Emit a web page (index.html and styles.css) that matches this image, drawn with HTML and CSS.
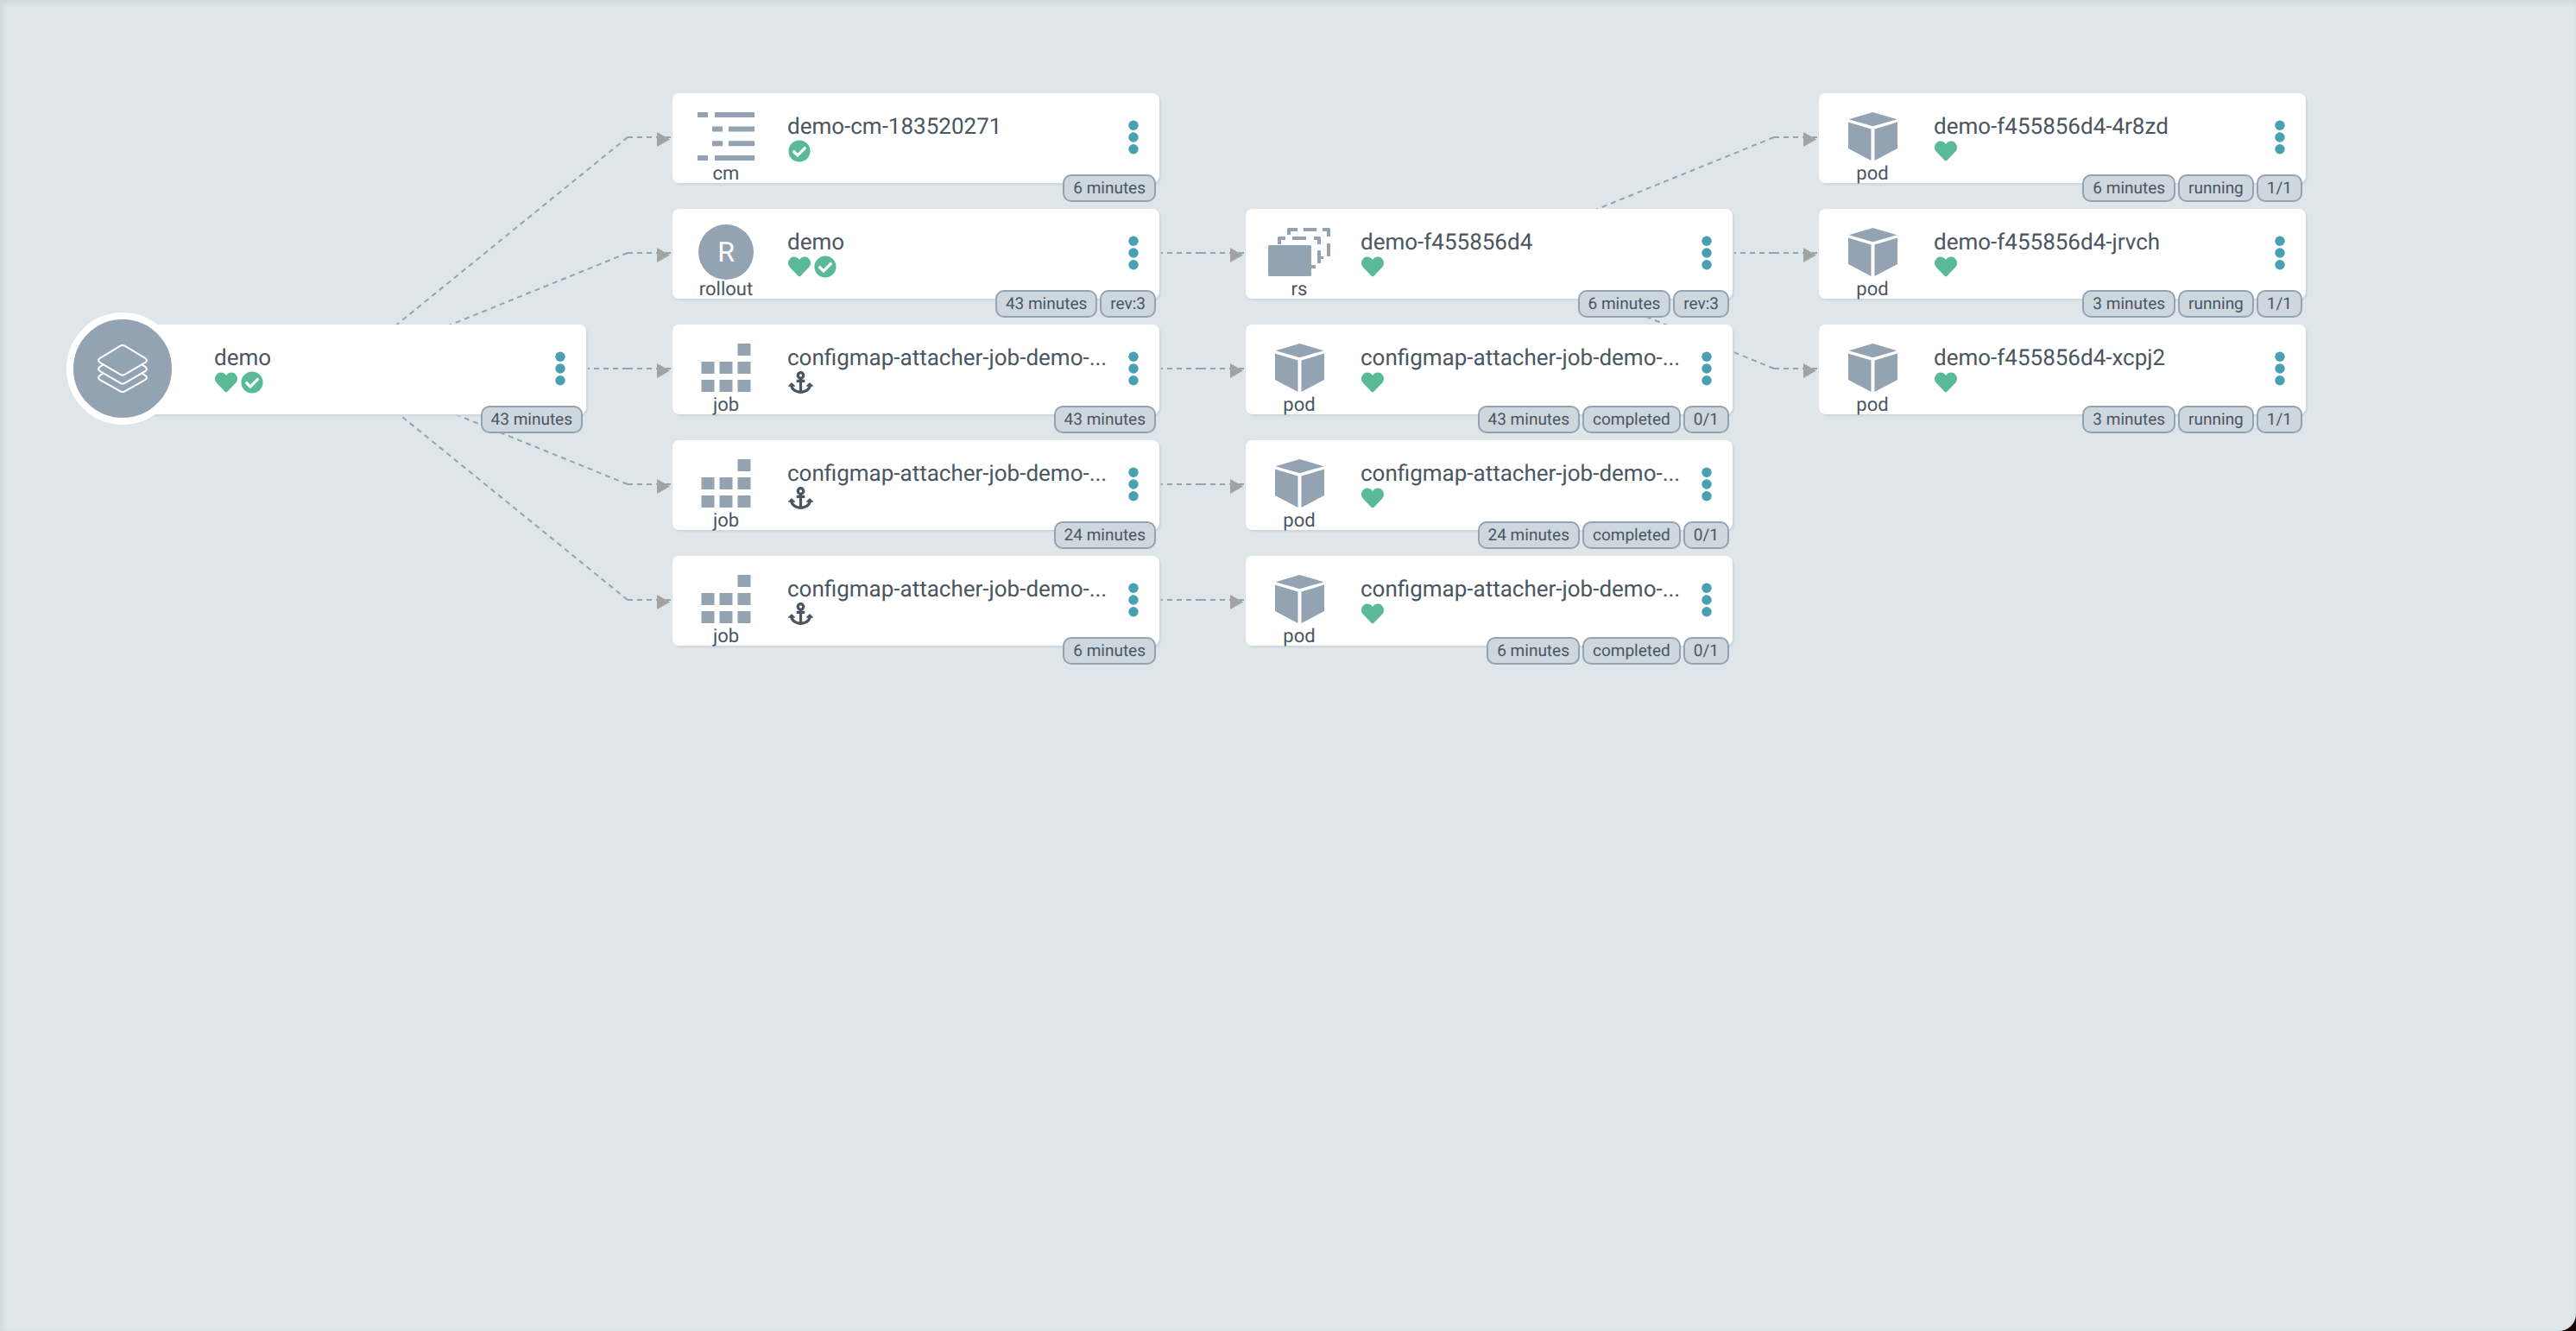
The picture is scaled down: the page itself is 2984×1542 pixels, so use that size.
FILE: index.html
```html
<!DOCTYPE html>
<html lang="en">
<head>
<meta charset="utf-8">
<title>demo - resource tree</title>
<link rel="stylesheet" href="styles.css">
</head>
<body>
<svg class="sprite" aria-hidden="true">
  <symbol id="layers" viewBox="0 0 58 56">
    <g fill="none" stroke="#fff" stroke-width="2" stroke-linejoin="round" stroke-linecap="round">
      <path d="M26.500 1.700Q29 .3 31.500 1.700L55.500 16.200Q58.500 18.500 55.500 20.800L31.500 34.800Q29 36.300 26.500 34.800L2.500 20.800Q-.5 18.500 2.500 16.200Z"/>
      <path d="M6.500 23.500L2.500 26.200Q-.5 28.500 2.500 30.800L26.500 44.800Q29 46.300 31.500 44.800L55.500 30.800Q58.500 28.500 55.500 26.200L51.500 23.500"/>
      <path d="M6.500 33.500L2.500 36.200Q-.5 38.500 2.500 40.800L26.500 54.300Q29 55.800 31.500 54.300L55.500 40.800Q58.500 38.500 55.500 36.200L51.500 33.500"/>
    </g>
  </symbol>
  <symbol id="cm" viewBox="0 0 66 56">
    <path d="M0 0h12v6H0zM20 0h46v6H20zM17 16.500h12v6H17zM36 16.500h30v6H36zM17 33.300h12v6H17zM36 33.300h30v6H36zM0 50h12v6H0zM20 50h46v6H20z"/>
  </symbol>
  <symbol id="job" viewBox="0 0 58 56">
    <path d="M42.500 0h15v14h-15zM.5 21h15v14H.5zM21.500 21h15v14h-15zM42.500 21h15v14h-15zM.5 42h15v14H.5zM21.500 42h15v14h-15zM42.500 42h15v14h-15z"/>
  </symbol>
  <symbol id="rs" viewBox="0 0 72 56">
    <rect y="20" width="50" height="36" rx="1.500"/>
    <path d="M12 10h8v4h-5v5h-4v-8zM28 10h16v4H28zM53 10h7l1 1v8h-4v-5h-4zM57 26h4v7h3v3h-3v5h-4zM50 43h5v4h-5zM23 0h11v4h-8v4h-4V1zM41 0h15v4H41zM63 0h8l1 1v9h-4V4h-5zM68 18h4v15h-4z"/>
  </symbol>
  <symbol id="pod" viewBox="0 0 57 56">
    <path d="M28.500 0L56.500 8.200 28.500 16.200.7 8.200zM0 11.500L26.500 19.500V56L0 42zM57 11.500L30.500 19.500V56L57 42z"/>
  </symbol>
  <symbol id="heart" viewBox="0 0 512 512">
    <path d="M462.300 62.600C407.500 15.900 326 24.300 275.700 76.200L256 96.500l-19.700-20.300C186.100 24.300 104.500 15.900 49.700 62.600c-62.800 53.600-66.100 149.800-9.900 207.900l193.500 199.800c12.500 12.900 32.800 12.900 45.300 0l193.500-199.800c56.300-58.100 53-154.300-9.800-207.900z"/>
  </symbol>
  <symbol id="check" viewBox="0 0 512 512">
    <path d="M504 256c0 136.967-111.033 248-248 248S8 392.967 8 256 119.033 8 256 8s248 111.033 248 248zM227.314 387.314l184-184c6.248-6.248 6.248-16.379 0-22.627l-22.627-22.627c-6.248-6.249-16.379-6.249-22.628 0L216 308.118l-70.059-70.059c-6.248-6.248-16.379-6.248-22.628 0l-22.627 22.627c-6.248 6.248-6.248 16.379 0 22.627l104 104c6.249 6.249 16.379 6.249 22.628.001z"/>
  </symbol>
  <symbol id="anchor" viewBox="0 0 576 512">
    <path d="M12.971 352h32.394C67.172 454.735 181.944 512 288 512c106.229 0 220.853-57.380 242.635-160h32.394c10.691 0 16.045-12.926 8.485-20.485l-67.029-67.029c-4.686-4.686-12.284-4.686-16.971 0l-67.029 67.029c-7.560 7.560-2.206 20.485 8.485 20.485h35.146c-20.290 54.317-84.963 86.588-144.117 94.015V256h52c6.627 0 12-5.373 12-12v-40c0-6.627-5.373-12-12-12h-52v-5.470c37.281-13.226 63.971-48.851 63.971-90.530C384 42.977 340.877-.061 287.847 0 234.806.061 192 43.098 192 96.139 192 137.751 218.718 173.316 256 186.529V192h-52c-6.627 0-12 5.373-12 12v40c0 6.627 5.373 12 12 12h52v190.015c-58.936-7.399-123.820-39.679-144.117-94.015h35.146c10.691 0 16.045-12.926 8.485-20.485l-67.029-67.029c-4.686-4.686-12.284-4.686-16.971 0L4.485 331.515C-3.074 339.074 2.280 352 12.971 352zM288 64c17.645 0 32 14.355 32 32s-14.355 32-32 32-32-14.355-32-32 14.355-32 32-32z"/>
  </symbol>
  <symbol id="dots" viewBox="0 0 12 40">
    <circle cx="6" cy="6.300" r="5.700"/><circle cx="6" cy="20" r="5.700"/><circle cx="6" cy="33.700" r="5.700"/>
  </symbol>
  <symbol id="arrow" viewBox="0 0 15 17"><path d="M0 0L15 8.500 0 17z"/></symbol>
</svg>

<main class="tree">
  <svg class="edges" aria-hidden="true">
    <g class="lines">
      <path d="M727 159L397 427M727 159H777"/>
      <path d="M727 293L397 427M727 293H777"/>
      <path d="M727 427H397M727 427H777"/>
      <path d="M727 561L397 427M727 561H777"/>
      <path d="M727 695L397 427M727 695H777"/>
      <path d="M1391 293H1061M1391 293H1441"/>
      <path d="M1391 427H1061M1391 427H1441"/>
      <path d="M1391 561H1061M1391 561H1441"/>
      <path d="M1391 695H1061M1391 695H1441"/>
      <path d="M2055 159L1725 293M2055 159H2105"/>
      <path d="M2055 293H1725M2055 293H2105"/>
      <path d="M2055 427L1725 293M2055 427H2105"/>
    </g>
    <g class="arrows">
      <use href="#arrow" x="761" y="153" width="15" height="17"/>
      <use href="#arrow" x="761" y="287" width="15" height="17"/>
      <use href="#arrow" x="761" y="421" width="15" height="17"/>
      <use href="#arrow" x="761" y="555" width="15" height="17"/>
      <use href="#arrow" x="761" y="689" width="15" height="17"/>
      <use href="#arrow" x="1425" y="287" width="15" height="17"/>
      <use href="#arrow" x="1425" y="421" width="15" height="17"/>
      <use href="#arrow" x="1425" y="555" width="15" height="17"/>
      <use href="#arrow" x="1425" y="689" width="15" height="17"/>
      <use href="#arrow" x="2089" y="153" width="15" height="17"/>
      <use href="#arrow" x="2089" y="287" width="15" height="17"/>
      <use href="#arrow" x="2089" y="421" width="15" height="17"/>
    </g>
  </svg>

  <article class="node col-1 row-3">
    <div class="app-icon"><svg width="58" height="56"><use href="#layers"/></svg></div>
    <div class="kind"></div>
    <div class="info"><div class="name">demo</div><div class="status"><svg class="ok"><use href="#heart"/></svg><svg class="ok"><use href="#check"/></svg></div></div>
    <button class="menu" aria-label="Actions"><svg><use href="#dots"/></svg></button>
    <div class="badges"><span>43 minutes</span></div>
  </article>

  <article class="node col-2 row-1">
    <div class="kind"><div class="icon"><svg width="66" height="56"><use href="#cm"/></svg></div>cm</div>
    <div class="info"><div class="name">demo-cm-183520271</div><div class="status"><svg class="ok"><use href="#check"/></svg></div></div>
    <button class="menu" aria-label="Actions"><svg><use href="#dots"/></svg></button>
    <div class="badges"><span>6 minutes</span></div>
  </article>
  <article class="node col-2 row-2">
    <div class="kind"><div class="icon letter">R</div>rollout</div>
    <div class="info"><div class="name">demo</div><div class="status"><svg class="ok"><use href="#heart"/></svg><svg class="ok"><use href="#check"/></svg></div></div>
    <button class="menu" aria-label="Actions"><svg><use href="#dots"/></svg></button>
    <div class="badges"><span>43 minutes</span><span>rev:3</span></div>
  </article>
  <article class="node col-2 row-3">
    <div class="kind"><div class="icon"><svg width="58" height="56"><use href="#job"/></svg></div>job</div>
    <div class="info"><div class="name">configmap-attacher-job-demo-...</div><div class="status"><svg class="hook"><use href="#anchor"/></svg></div></div>
    <button class="menu" aria-label="Actions"><svg><use href="#dots"/></svg></button>
    <div class="badges"><span>43 minutes</span></div>
  </article>
  <article class="node col-2 row-4">
    <div class="kind"><div class="icon"><svg width="58" height="56"><use href="#job"/></svg></div>job</div>
    <div class="info"><div class="name">configmap-attacher-job-demo-...</div><div class="status"><svg class="hook"><use href="#anchor"/></svg></div></div>
    <button class="menu" aria-label="Actions"><svg><use href="#dots"/></svg></button>
    <div class="badges"><span>24 minutes</span></div>
  </article>
  <article class="node col-2 row-5">
    <div class="kind"><div class="icon"><svg width="58" height="56"><use href="#job"/></svg></div>job</div>
    <div class="info"><div class="name">configmap-attacher-job-demo-...</div><div class="status"><svg class="hook"><use href="#anchor"/></svg></div></div>
    <button class="menu" aria-label="Actions"><svg><use href="#dots"/></svg></button>
    <div class="badges"><span>6 minutes</span></div>
  </article>

  <article class="node col-3 row-2">
    <div class="kind"><div class="icon"><svg width="72" height="56"><use href="#rs"/></svg></div>rs</div>
    <div class="info"><div class="name">demo-f455856d4</div><div class="status"><svg class="ok"><use href="#heart"/></svg></div></div>
    <button class="menu" aria-label="Actions"><svg><use href="#dots"/></svg></button>
    <div class="badges"><span>6 minutes</span><span>rev:3</span></div>
  </article>
  <article class="node col-3 row-3">
    <div class="kind"><div class="icon"><svg width="57" height="56"><use href="#pod"/></svg></div>pod</div>
    <div class="info"><div class="name">configmap-attacher-job-demo-...</div><div class="status"><svg class="ok"><use href="#heart"/></svg></div></div>
    <button class="menu" aria-label="Actions"><svg><use href="#dots"/></svg></button>
    <div class="badges"><span>43 minutes</span><span>completed</span><span>0/1</span></div>
  </article>
  <article class="node col-3 row-4">
    <div class="kind"><div class="icon"><svg width="57" height="56"><use href="#pod"/></svg></div>pod</div>
    <div class="info"><div class="name">configmap-attacher-job-demo-...</div><div class="status"><svg class="ok"><use href="#heart"/></svg></div></div>
    <button class="menu" aria-label="Actions"><svg><use href="#dots"/></svg></button>
    <div class="badges"><span>24 minutes</span><span>completed</span><span>0/1</span></div>
  </article>
  <article class="node col-3 row-5">
    <div class="kind"><div class="icon"><svg width="57" height="56"><use href="#pod"/></svg></div>pod</div>
    <div class="info"><div class="name">configmap-attacher-job-demo-...</div><div class="status"><svg class="ok"><use href="#heart"/></svg></div></div>
    <button class="menu" aria-label="Actions"><svg><use href="#dots"/></svg></button>
    <div class="badges"><span>6 minutes</span><span>completed</span><span>0/1</span></div>
  </article>

  <article class="node col-4 row-1">
    <div class="kind"><div class="icon"><svg width="57" height="56"><use href="#pod"/></svg></div>pod</div>
    <div class="info"><div class="name">demo-f455856d4-4r8zd</div><div class="status"><svg class="ok"><use href="#heart"/></svg></div></div>
    <button class="menu" aria-label="Actions"><svg><use href="#dots"/></svg></button>
    <div class="badges"><span>6 minutes</span><span>running</span><span>1/1</span></div>
  </article>
  <article class="node col-4 row-2">
    <div class="kind"><div class="icon"><svg width="57" height="56"><use href="#pod"/></svg></div>pod</div>
    <div class="info"><div class="name">demo-f455856d4-jrvch</div><div class="status"><svg class="ok"><use href="#heart"/></svg></div></div>
    <button class="menu" aria-label="Actions"><svg><use href="#dots"/></svg></button>
    <div class="badges"><span>3 minutes</span><span>running</span><span>1/1</span></div>
  </article>
  <article class="node col-4 row-3">
    <div class="kind"><div class="icon"><svg width="57" height="56"><use href="#pod"/></svg></div>pod</div>
    <div class="info"><div class="name">demo-f455856d4-xcpj2</div><div class="status"><svg class="ok"><use href="#heart"/></svg></div></div>
    <button class="menu" aria-label="Actions"><svg><use href="#dots"/></svg></button>
    <div class="badges"><span>3 minutes</span><span>running</span><span>1/1</span></div>
  </article>
</main>
</body>
</html>
```
FILE: styles.css
```css
* {
  box-sizing: border-box;
}

body {
  margin: 0;
  background: #16060a;
  color: #495661;
  font-family: Roboto, sans-serif;
  text-rendering: geometricPrecision;
}

.sprite {
  position: absolute;
  width: 0;
  height: 0;
}

/* Free canvas that holds the graph */
.tree {
  position: relative;
  min-height: 100vh;
  overflow: hidden;
  background: #dee6e9;
  border-bottom-right-radius: 20px;
  box-shadow: inset 2px 3px 6px #ccd5d9;
}

.edges {
  position: absolute;
  inset: 0;
  width: 100%;
  height: 100%;
}

.lines {
  fill: none;
  stroke: #93a3b1;
  stroke-width: 2;
  stroke-dasharray: 6 5;
}

.arrows {
  fill: #a2a2a2;
}

.node {
  position: absolute;
  display: flex;
  width: 564px;
  height: 104px;
  background: #fff;
  border-radius: 8px;
  box-shadow: 2px 2px 2px #ccd6dd;
}

.col-1 { left: 115px; }
.col-2 { left: 779px; }
.col-3 { left: 1443px; }
.col-4 { left: 2107px; }

.row-1 { top: 108px; }
.row-2 { top: 242px; }
.row-3 { top: 376px; }
.row-4 { top: 510px; }
.row-5 { top: 644px; }

.app-icon {
  position: absolute;
  left: -38px;
  top: -14px;
  display: grid;
  place-items: center;
  width: 130px;
  height: 130px;
  background: #93a3b1;
  border: 8px solid #fff;
  border-radius: 50%;
}

.kind {
  flex: none;
  display: flex;
  flex-direction: column;
  align-items: center;
  width: 124px;
  padding-top: 18px;
  font-size: 22px;
  line-height: 24px;
}

.icon {
  flex: none;
  display: grid;
  place-items: center;
  height: 64px;
  fill: #93a3b1;
}

.letter {
  width: 64px;
  background: #93a3b1;
  border-radius: 50%;
  color: #fff;
  font-size: 32px;
}

.info {
  flex: 1;
  min-width: 0;
  padding: 23px 0 0 9px;
}

.name {
  font-size: 26px;
  line-height: 32px;
  white-space: nowrap;
}

.status {
  display: flex;
  gap: 4px;
  margin-top: -1px;
  padding-left: 1px;
}

.ok {
  width: 26px;
  height: 26px;
  fill: #5aba98;
}

.hook {
  width: 29px;
  height: 26px;
  fill: #495661;
}

.menu {
  flex: none;
  width: 60px;
  padding: 0 0 2px;
  background: none;
  border: 0;
  cursor: pointer;
}

.menu svg {
  display: block;
  width: 12px;
  height: 40px;
  margin: 0 auto;
  fill: #48a0b2;
}

.badges {
  position: absolute;
  right: 4px;
  top: 94px;
  display: flex;
  gap: 3px;
}

.badges span {
  padding: 0 10px;
  background: #ced6de;
  border: 2px solid #93a3b1;
  border-radius: 10px;
  font-size: 19px;
  line-height: 28px;
}
```
